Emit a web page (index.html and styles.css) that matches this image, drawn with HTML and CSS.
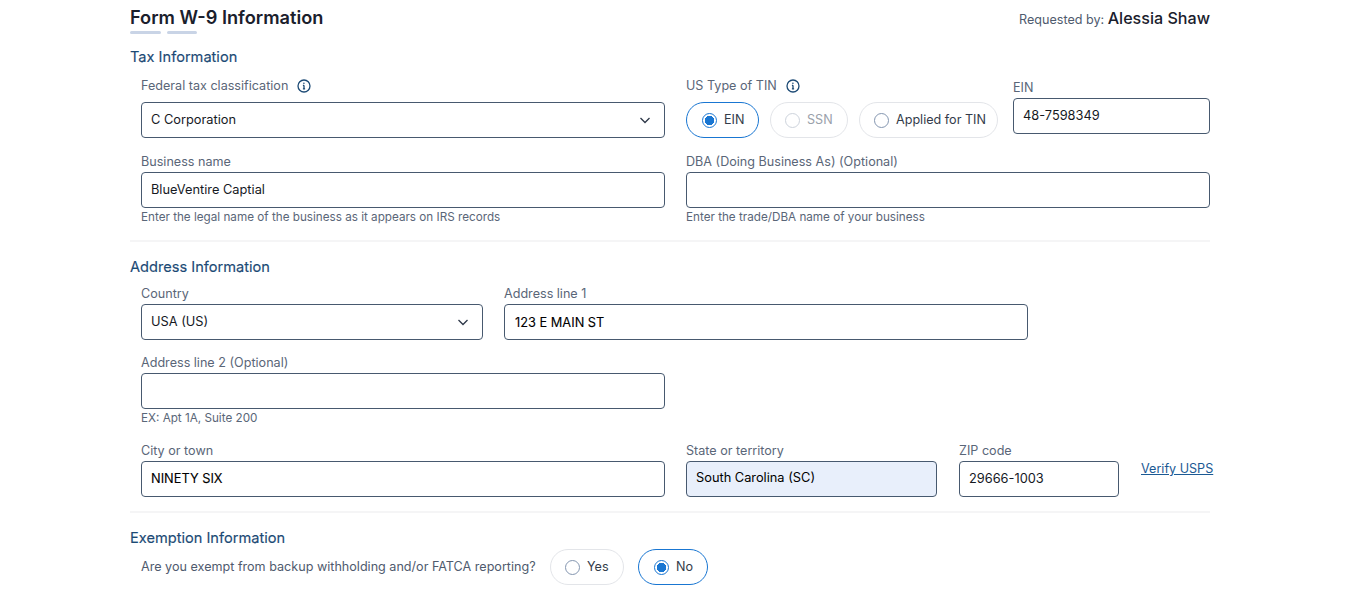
FILE: index.html
```html
<!DOCTYPE html>
<html lang="en">
<head>
<meta charset="utf-8">
<title>Form W-9 Information</title>
<link rel="stylesheet" href="styles.css">
</head>
<body>
<main class="page">
  <header class="top">
    <div>
      <h1 class="title">Form W-9 Information</h1>
      <div class="steps"><span class="step"></span><span class="step"></span></div>
    </div>
    <p class="requested">Requested by: <strong>Alessia Shaw</strong></p>
  </header>

  <section class="section tax">
    <h2 class="heading">Tax Information</h2>
    <div class="row two first">
      <div class="field">
        <div class="label with-icon">Federal tax classification
          <svg class="info" viewBox="0 0 14 14"><circle cx="7" cy="7" r="6"/><path d="M7 6.3v3.6M5.9 9.9h2.2M5.9 6.3H7"/><circle class="dot" cx="6.9" cy="4.2" r=".8"/></svg>
        </div>
        <div class="input select"><span>C Corporation</span>
          <svg class="chev" viewBox="0 0 12 12"><path d="M1.5 4l4.5 4.5L10.5 4"/></svg>
        </div>
      </div>
      <div class="tin">
        <div class="field">
          <div class="label with-icon">US Type of TIN
            <svg class="info" viewBox="0 0 14 14"><circle cx="7" cy="7" r="6"/><path d="M7 6.3v3.6M5.9 9.9h2.2M5.9 6.3H7"/><circle class="dot" cx="6.9" cy="4.2" r=".8"/></svg>
          </div>
          <div class="pills">
            <div class="pill on ein"><span class="radio"></span><span class="pill-text">EIN</span></div>
            <div class="pill off ssn"><span class="radio"></span><span class="pill-text">SSN</span></div>
            <div class="pill applied"><span class="radio"></span><span class="pill-text">Applied for TIN</span></div>
          </div>
        </div>
        <div class="field ein-field">
          <div class="label">EIN</div>
          <input class="input raised" type="text" value="48-7598349">
        </div>
      </div>
    </div>
    <div class="row two second">
      <div class="field">
        <div class="label">Business name</div>
        <input class="input raised" type="text" value="BlueVentire Captial">
        <div class="help">Enter the legal name of the business as it appears on IRS records</div>
      </div>
      <div class="field">
        <div class="label">DBA (Doing Business As) (Optional)</div>
        <input class="input" type="text">
        <div class="help">Enter the trade/DBA name of your business</div>
      </div>
    </div>
  </section>

  <section class="section address">
    <h2 class="heading">Address Information</h2>
    <div class="row addr1">
      <div class="field country">
        <div class="label">Country</div>
        <div class="input select"><span>USA (US)</span>
          <svg class="chev" viewBox="0 0 12 12"><path d="M1.5 4l4.5 4.5L10.5 4"/></svg>
        </div>
      </div>
      <div class="field line1">
        <div class="label">Address line 1</div>
        <input class="input upper" type="text" value="123 E MAIN ST">
      </div>
    </div>
    <div class="row addr2">
      <div class="field half">
        <div class="label">Address line 2 (Optional)</div>
        <input class="input" type="text">
        <div class="help">EX: Apt 1A, Suite 200</div>
      </div>
    </div>
    <div class="row addr3">
      <div class="field half">
        <div class="label">City or town</div>
        <input class="input upper raised" type="text" value="NINETY SIX">
      </div>
      <div class="field state">
        <div class="label">State or territory</div>
        <div class="input filled"><span>South Carolina (SC)</span></div>
      </div>
      <div class="field zip">
        <div class="label">ZIP code</div>
        <input class="input raised" type="text" value="29666-1003">
      </div>
      <a class="verify" href="#">Verify USPS</a>
    </div>
  </section>

  <section class="section exempt">
    <h2 class="heading">Exemption Information</h2>
    <div class="question">
      <span class="qtext">Are you exempt from backup withholding and/or FATCA reporting?</span>
      <div class="pill yes"><span class="radio"></span><span class="pill-text">Yes</span></div>
      <div class="pill on no"><span class="radio"></span><span class="pill-text">No</span></div>
    </div>
  </section>
</main>
</body>
</html>
```

FILE: styles.css
```css
* { box-sizing: border-box; }
html, body { margin: 0; padding: 0; background: #fff; }
body { font-family: Inter, "Liberation Sans", sans-serif; color: #1a202c; overflow: hidden; }

.page { width: 1080px; margin-left: 130px; padding-top: 6px; }

.top { display: flex; justify-content: space-between; align-items: flex-start; height: 33px; }
.title { margin: 0; font-size: 18.2px; line-height: 22px; font-weight: 600; color: #1a202c; }
.steps { display: flex; gap: 6px; margin-top: 3px; }
.step { width: 31px; height: 3px; border-radius: 2px; background: #c9d4e6; }
.step + .step { width: 30px; }
.requested { margin: 2px 0 0; font-size: 12.6px; line-height: 20px; color: #4f5b6e; }
.requested strong { font-size: 16.1px; font-weight: 500; color: #1a202c; }

.heading { margin: 0; font-size: 14.6px; line-height: 18px; font-weight: 400; color: #1c4a75; -webkit-text-stroke: 0.15px #1c4a75; }

.section { border-bottom: 2px solid #f5f5f6; }
.tax { margin-top: 9px; padding-bottom: 16px; }
.address { margin-top: 16px; padding-bottom: 14px; }
.exempt { margin-top: 16px; border-bottom: 0; }

.row { margin-left: 11px; width: 1069px; }
.two { display: grid; grid-template-columns: 524px 524px; column-gap: 21px; }
.first { margin-top: 12px; }
.second { margin-top: 16px; }

.label { font-size: 12.6px; line-height: 16px; color: #5a6678; white-space: nowrap; margin-bottom: 2px; }
.with-icon { display: flex; align-items: center; gap: 9px; margin-bottom: 8px; }
.info { width: 14px; height: 14px; fill: none; stroke: #1c4a75; stroke-width: 1.3; }
.info .dot { fill: #1c4a75; stroke: none; }

.input {
  display: flex; align-items: center; width: 100%; height: 36px; padding: 0 9px;
  border: 1px solid #47596f; border-radius: 4px; background: #fff;
  font-family: Inter, "Liberation Sans", sans-serif; font-size: 12.8px; color: #16191f; outline: none;
}
.select { justify-content: space-between; padding-bottom: 2px; }
.raised { padding-bottom: 2px; }
.chev { width: 12px; height: 12px; margin: 2px 4px 0 0; fill: none; stroke: #2d3748; stroke-width: 1.3; }
.filled { background: #e8effb; padding-bottom: 4px; color: #000; }
.upper { color: #000; -webkit-text-stroke: 0.1px #000; }
.line1 .input { padding-left: 10px; }
.help { font-size: 11.7px; line-height: 14px; margin-top: 2px; color: #5a6678; white-space: nowrap; }

.tin { display: flex; justify-content: space-between; }
.pills { display: flex; gap: 11px; }
.ein-field { width: 197px; margin-top: 2px; }
.pill {
  display: flex; align-items: center; gap: 7px; height: 36px; padding: 0 12px 0 14px;
  border: 1px solid #e3e5e9; border-radius: 18px; font-size: 12.6px; color: #333c4a; white-space: nowrap; flex: none;
}
.pill-text { margin-bottom: 2px; }
.radio { width: 15px; height: 15px; border-radius: 50%; border: 1px solid #8496b0; background: #fff; flex: none; }
.pill.on { border-color: #1976d2; }
.pill.on .radio { border-color: #1976d2; background: radial-gradient(circle, #1976d2 0 4.5px, #fff 5px); }
.pill.off { color: #9aa1ab; }
.pill.off .radio { border-color: #cdd3dc; }
.ein { width: 73px; padding-left: 15px; }
.ssn { width: 78px; }
.applied { width: 139px; }

.addr1 { display: flex; gap: 21px; margin-top: 10px; }
.country { width: 342px; }
.line1 { width: 524px; }
.addr2 { margin-top: 15px; }
.half { width: 524px; flex: none; }
.addr3 { display: flex; margin-top: 18px; }
.state { width: 251px; margin-left: 21px; flex: none; }
.zip { width: 160px; margin-left: 22px; flex: none; }
.verify { margin: 18px 0 0 22px; font-size: 12.6px; line-height: 16px; color: #1c5a94; white-space: nowrap; flex: none; align-self: flex-start; }

.question { display: flex; align-items: center; margin: 2px 0 0 11px; }
.qtext { font-size: 12.6px; color: #4f5b6e; width: 409px; flex: none; margin-bottom: 2px; }
.yes { width: 74px; }
.no { width: 70px; margin-left: 14px; padding-left: 15px; }
```
